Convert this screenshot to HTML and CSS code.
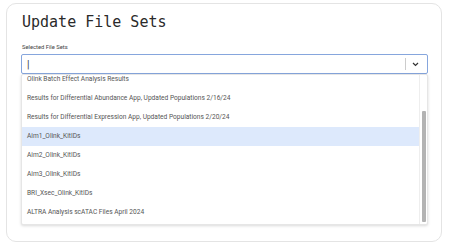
FILE: index.html
```html
<!DOCTYPE html>
<html>
	<head>
		<meta charset="utf-8">
		<title>Update File Sets</title>
		<link rel="stylesheet" href="styles.css">
	</head>
	<body>
		<div class="card">
			<h1 class="title">Update File Sets</h1>
			<div class="field">
				<label class="label">Selected File Sets</label>
				<div class="select">
					<span class="caret">|</span>
					<span class="sep"></span>
					<svg class="chev" width="7" height="5" viewBox="0 0 7 5"><path d="M1 1l2.5 2.5 2.5-2.5" fill="none" stroke="#333" stroke-width="1.2"/></svg>
				</div>
				<div class="focusline"></div>
				<div class="menu">
					<ul class="list">
						<li class="opt">Olink Batch Effect Analysis Results</li>
						<li class="opt">Results for Differential Abundance App, Updated Populations 2/16/24</li>
						<li class="opt">Results for Differential Expression App, Updated Populations 2/20/24</li>
						<li class="opt hover">Aim1_Olink_KitIDs</li>
						<li class="opt">Aim2_Olink_KitIDs</li>
						<li class="opt">Aim3_Olink_KitIDs</li>
						<li class="opt">BRI_Xsec_Olink_KitIDs</li>
						<li class="opt">ALTRA Analysis scATAC Files April 2024</li>
					</ul>
					<div class="scroll"><div class="thumb"></div></div>
				</div>
			</div>
		</div>
	</body>
</html>
```

FILE: styles.css
```css
*{
	margin: 0;
	padding: 0;
	box-sizing: border-box;
}
body{
	background: #fff;
	font-family: Roboto, "Liberation Sans", sans-serif;
}
.card{
	margin: 3px 8px 0 6px;
	height: 239px;
	border: 1px solid #e4e4e4;
	border-radius: 10px;
	padding: 8px 13px 0 14px;
}
.title{
	font-family: "DejaVu Sans Mono", "Liberation Mono", monospace;
	font-weight: normal;
	font-size: 15px;
	line-height: 20px;
	color: #2a2a2a;
	padding-left: 1px;
}
.field{
	position: relative;
	margin-top: 10px;
}
.label{
	display: block;
	font-size: 5.8px;
	line-height: 10px;
	color: #444;
	padding-left: 1px;
}
.select{
	margin-top: 2px;
	height: 20px;
	border: 1px solid #86a6dd;
	border-radius: 2px;
	display: flex;
	align-items: center;
	padding: 0 8px 0 5px;
}
.caret{
	font-size: 10px;
	color: #333;
	flex: 1;
}
.sep{
	width: 1px;
	height: 12px;
	background: #ccc;
	margin-right: 6px;
}
.focusline{
	width: 58px;
	height: 2px;
	background: #f0b43c;
	margin: 1px 0 0 1px;
}
.menu{
	position: absolute;
	top: 32px;
	left: 0;
	right: 0;
	height: 151px;
	background: #fff;
	border: 1px solid #e6e6e6;
	border-radius: 2px;
	box-shadow: 0 1px 3px rgba(0,0,0,0.15);
	overflow: hidden;
	display: flex;
}
.list{
	flex: 1;
	list-style: none;
	margin-top: -5px;
}
.opt{
	height: 19px;
	line-height: 19px;
	font-size: 6.6px;
	color: #555;
	padding-left: 5px;
	white-space: nowrap;
}
.opt.hover{
	background: #dde9fc;
}
.scroll{
	width: 8px;
	border-left: 1px solid #eee;
	padding: 36px 1px 2px 2px;
}
.thumb{
	height: 100%;
	background: #b3b3b3;
	border-radius: 1px;
}
```
